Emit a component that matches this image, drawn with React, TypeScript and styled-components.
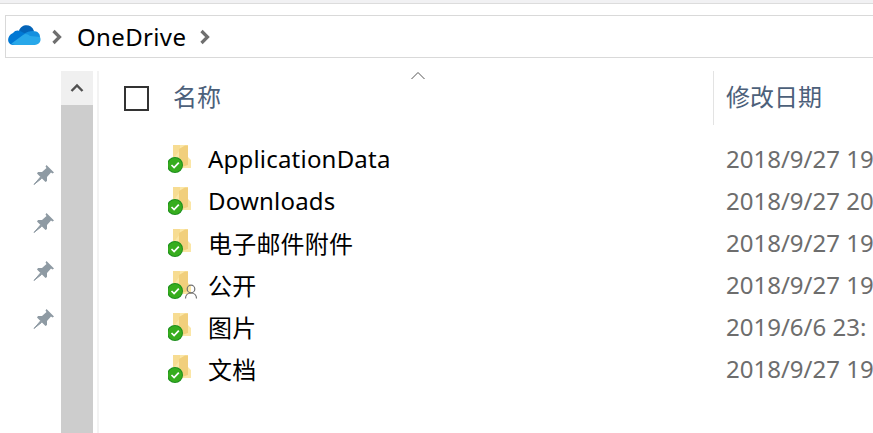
import {FC} from "react";
import styled, {createGlobalStyle} from "styled-components";

const GlobalStyle = createGlobalStyle`
    html, body {
        margin: 0;
        padding: 0;
        background: #fff;
        overflow: hidden;
    }
    body {
        font-family: "Noto Sans", "Noto Sans CJK SC", sans-serif;
    }
`;

const Page = styled.div`
    width: 873px;
    height: 433px;
    overflow: hidden;
    display: flex;
    flex-direction: column;
`;

const TopStrip = styled.div`
    height: 3px;
    background: #f1f1f3;
    border-bottom: 1px solid #dcdcdc;
`;

const AddressBar = styled.div`
    margin: 11px 0 13px 5px;
    height: 41px;
    border: 1px solid #d9d9d9;
    border-right: none;
    display: flex;
    align-items: center;
    padding-left: 1px;
`;

const CrumbGap = styled.span`
    width: 10px;
`;

const Crumb = styled.span`
    font-size: 24px;
    letter-spacing: 0.35px;
    color: #000;
    margin: 0 13px 0 14px;
    line-height: 41px;
`;

const Body = styled.div`
    flex: 1;
    display: flex;
    min-height: 0;
`;

const PinPane = styled.div`
    width: 61px;
    padding: 93px 0 0 33px;
    box-sizing: border-box;
    display: flex;
    flex-direction: column;
    gap: 26px;
`;

const Scrollbar = styled.div`
    width: 32px;
    display: flex;
    flex-direction: column;
    background: #f0f0f0;
`;

const ScrollButton = styled.div`
    height: 34px;
    display: flex;
    align-items: center;
    justify-content: center;
`;

const ScrollThumb = styled.div`
    flex: 1;
    background: #cdcdcd;
`;

const Gutter = styled.div`
    width: 2px;
    margin-left: 4px;
    background: #f3f3f3;
`;

const Listing = styled.div`
    flex: 1;
    min-width: 0;
`;

const HeaderRow = styled.div`
    position: relative;
    height: 54px;
    display: grid;
    grid-template-columns: 49px 540px 1fr;
    align-items: center;
    padding-left: 25px;
    color: #4c607a;
    font-size: 24px;
    white-space: nowrap;
`;

const CheckBox = styled.div`
    width: 25px;
    height: 25px;
    box-sizing: border-box;
    border: 2px solid #333;
`;

const NameHeading = styled.div`
    line-height: 52px;
    height: 54px;
`;

const SortCaret = styled.svg`
    position: absolute;
    left: 312px;
    top: 0;
`;

const DateHeading = styled.div`
    border-left: 1px solid #e3e3e3;
    height: 54px;
    line-height: 52px;
    padding-left: 12px;
`;

const Rows = styled.div`
    margin-top: 12px;
`;

const Row = styled.div`
    height: 42px;
    display: grid;
    grid-template-columns: 40px 518px 1fr;
    align-items: center;
    padding-left: 69px;
    white-space: nowrap;
`;

const ItemIcon = styled.div`
    position: relative;
    width: 36px;
    height: 30px;
`;

const ItemName = styled.div`
    font-size: 24px;
    letter-spacing: 0.2px;
    color: #000;
`;

const ItemDate = styled.div`
    font-size: 24px;
    color: #6d6d6d;
`;

const OneDriveLogo: FC = () => (
    <svg width="34" height="24" viewBox="0 0 34 24" style={{marginBottom: 3}}>
        <path d="M12 8 C14 1 24 0 27 8 L20 15 Z" fill="#0364b8"/>
        <path d="M6 10 C8 7 11 7 13 8 L21 12 L13 22 L6 22 C0 22 -1 13 6 10 Z" fill="#0078d4"/>
        <path d="M26 8 C31 8 33 11 33 14 L21 17 L17 11 C19 9 23 8 26 8 Z" fill="#1490df"/>
        <path d="M16 12 C18 10 21 11 23 13 L33 14 C35 19 31 22 28 22 L8 22 C6 22 5 21 4.5 20.5 Z" fill="#28a8ea"/>
    </svg>
);

const CrumbArrow: FC = () => (
    <svg width="12" height="16" viewBox="0 0 12 16">
        <path d="M2.5 2 L8.5 8 L2.5 14" fill="none" stroke="#6f6f6f" strokeWidth="3.2"/>
    </svg>
);

const Pin: FC = () => (
    <svg width="22" height="22" viewBox="0 0 22 22">
        <path d="M13.5 1 L21 8.5 L19.5 9.5 L18 8.5 L14 13 L14 17 L12.5 18 L4 9.5 L5 8 L9 8 L13.5 4 L12.5 2.5 Z" fill="#8e9aa3"/>
        <path d="M7.5 13 L1 20.5 L8.5 14.5 Z" fill="#8e9aa3" stroke="#8e9aa3"/>
    </svg>
);

const FolderIcon: FC<{shared?: boolean}> = ({shared}) => (
    <svg width="36" height="30" viewBox="0 0 36 30" style={{position: "absolute", left: 0, top: 0}}>
        <path d="M5 2 L20 2 L20 14 L23 17 L23 25 L5 25 Z" fill="#fbe6a6"/>
        <path d="M5 2 L12 2 L12 7 L5 16 Z" fill="#f7dc92"/>
        <path d="M11 6 L17 2.5 L20 2.5 L20 22 L11 25 Z" fill="#f1cf7c"/>
        <circle cx="7" cy="22" r="8" fill="#1c8e1c"/>
        <circle cx="7" cy="22" r="7" fill="#37ad1e"/>
        <path d="M3.5 22 L6.1 24.6 L10.8 19.6" fill="none" stroke="#fff" strokeWidth="1.7"/>
        {shared && (
            <g fill="none" stroke="#707070" strokeWidth="1.2">
                <circle cx="23" cy="20" r="3.8"/>
                <path d="M17.5 29.5 C17.5 26 20 24 23 24 C26 24 28.5 26 28.5 29.5"/>
            </g>
        )}
    </svg>
);

const items = [
    {name: "ApplicationData", date: "2018/9/27 19"},
    {name: "Downloads", date: "2018/9/27 20"},
    {name: "电子邮件附件", date: "2018/9/27 19"},
    {name: "公开", date: "2018/9/27 19", shared: true},
    {name: "图片", date: "2019/6/6 23:"},
    {name: "文档", date: "2018/9/27 19"},
];

const App: FC = () => (
    <Page>
        <GlobalStyle/>
        <TopStrip/>
        <AddressBar>
            <OneDriveLogo/>
            <CrumbGap/>
            <CrumbArrow/>
            <Crumb>OneDrive</Crumb>
            <CrumbArrow/>
        </AddressBar>
        <Body>
            <PinPane>
                <Pin/><Pin/><Pin/><Pin/>
            </PinPane>
            <Scrollbar>
                <ScrollButton>
                    <svg width="14" height="10" viewBox="0 0 14 10">
                        <path d="M1.5 8 L7 2.5 L12.5 8" fill="none" stroke="#505050" strokeWidth="2.4"/>
                    </svg>
                </ScrollButton>
                <ScrollThumb/>
            </Scrollbar>
            <Gutter/>
            <Listing>
                <HeaderRow>
                    <CheckBox/>
                    <NameHeading>名称</NameHeading>
                    <DateHeading>修改日期</DateHeading>
                    <SortCaret width="14" height="9" viewBox="0 0 14 9">
                        <path d="M0.5 8 L7 1.5 L13.5 8" fill="none" stroke="#555" strokeWidth="1"/>
                    </SortCaret>
                </HeaderRow>
                <Rows>
                    {items.map((item) => (
                        <Row key={item.name}>
                            <ItemIcon><FolderIcon shared={item.shared}/></ItemIcon>
                            <ItemName>{item.name}</ItemName>
                            <ItemDate>{item.date}</ItemDate>
                        </Row>
                    ))}
                </Rows>
            </Listing>
        </Body>
    </Page>
);

export default App;
